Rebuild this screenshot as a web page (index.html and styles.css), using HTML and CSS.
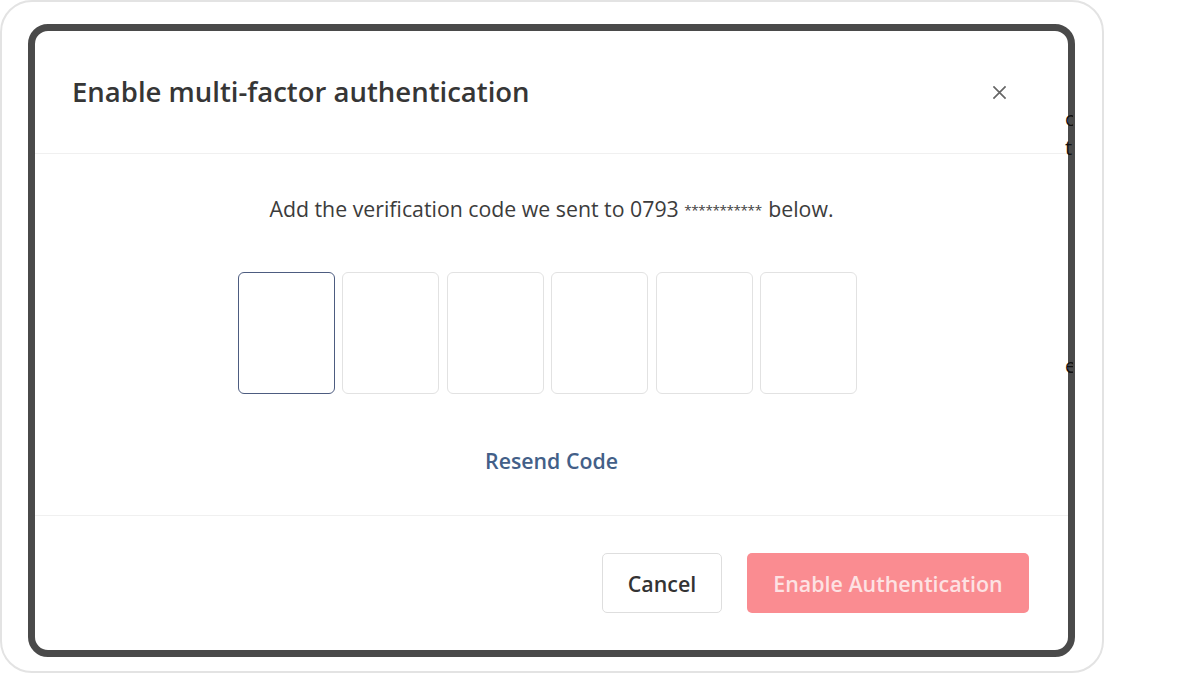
FILE: index.html
```html
<!DOCTYPE html>
<html lang="en">
<head>
  <meta charset="UTF-8" />
  <title>Enable multi-factor authentication</title>
  <link rel="stylesheet" href="styles.css">
</head>
<body>
  <div class="frame">
    <div class="device">
      <div class="modal">
        <div class="modal-header">
          <h2>Enable multi-factor authentication</h2>
          <button class="close" aria-label="Close">
            <svg width="15" height="15" viewBox="0 0 16 16"><path d="M1.5 1.5 L14.5 14.5 M14.5 1.5 L1.5 14.5" stroke="#666" stroke-width="1.8" fill="none"/></svg>
          </button>
        </div>
        <div class="modal-body">
          <p class="hint">Add the verification code we sent to 0793 <span class="mask">***********</span> below.</p>
          <div class="code">
            <input class="digit focused" maxlength="1" />
            <input class="digit" maxlength="1" />
            <input class="digit" maxlength="1" />
            <input class="digit" maxlength="1" />
            <input class="digit" maxlength="1" />
            <input class="digit" maxlength="1" />
          </div>
          <a class="resend" href="#">Resend Code</a>
        </div>
        <div class="modal-footer">
          <button class="btn cancel">Cancel</button>
          <button class="btn primary">Enable Authentication</button>
        </div>
      </div>
      <span class="peek p1">o</span>
      <span class="peek p2">t</span>
      <span class="peek p3">e</span>
    </div>
  </div>
</body>
</html>
```

FILE: styles.css
```css
* { box-sizing: border-box; }
body {
  margin: 0; background: #fff;
  font-family: "Open Sans", "Noto Sans", sans-serif;
}
.frame {
  width: 1104px; height: 673px;
  border: 2px solid #e3e3e3; border-radius: 32px;
  padding: 22px 27px 14px 26px;
}
.device {
  position: relative;
  width: 1047px; height: 633px;
  border: 7px solid #4a4a4a; border-radius: 20px;
  background: #fff;
}
.modal {
  display: flex; flex-direction: column; height: 100%;
  border-radius: 12px; overflow: hidden;
}
.modal-header {
  height: 123px; padding: 0 61px 0 37px;
  display: flex; align-items: center; justify-content: space-between;
  border-bottom: 1px solid #f0f0f0;
}
.modal-header h2 {
  margin: 0; font-size: 27.5px; line-height: 36px; font-weight: 600; color: #363636;
}
.close {
  background: none; border: none; padding: 0; width: 15px; height: 15px;
  display: flex; margin-top: 1px;
}
.modal-body {
  padding: 41px 37px 40px;
  display: flex; flex-direction: column; align-items: center;
  border-bottom: 1px solid #f0f0f0;
}
.hint {
  margin: 0; font-size: 21.3px; line-height: 28px; color: #3c3c3c;
}
.mask { font-size: 13.5px; letter-spacing: -0.4px; vertical-align: 2px; margin-right: 1px; }
.code {
  display: flex; gap: 7.4px; margin: 48px 0 0 -8px;
}
.digit {
  width: 97px; height: 122px;
  border: 1px solid #e2e2e2; border-radius: 6px;
  background: #fff; outline: none;
}
.digit.focused { border: 1.5px solid #4d5c80; }
.resend {
  margin-top: 53px; font-size: 21.3px; line-height: 28px; font-weight: 600;
  color: #435f88; text-decoration: none;
}
.modal-footer {
  flex: 1; display: flex; justify-content: flex-end; align-items: flex-start;
  gap: 25px; padding: 37px 39px 0;
}
.btn {
  height: 60px; border-radius: 5px; font-family: inherit;
  font-size: 21.4px; font-weight: 600; padding: 0;
}
.cancel {
  width: 120px; background: #fff; border: 1px solid #dedede; color: #333;
}
.primary {
  width: 282px; background: #fa8c91; border: none; color: #fde2e3;
}
.peek {
  position: absolute; font-size: 20px; color: #111; line-height: 1;
  overflow: hidden; width: 8px;
}
.p1 { right: -5px; top: 78px; }
.p2 { right: -5px; top: 107px; }
.p3 { right: -5px; top: 325px; }
```
